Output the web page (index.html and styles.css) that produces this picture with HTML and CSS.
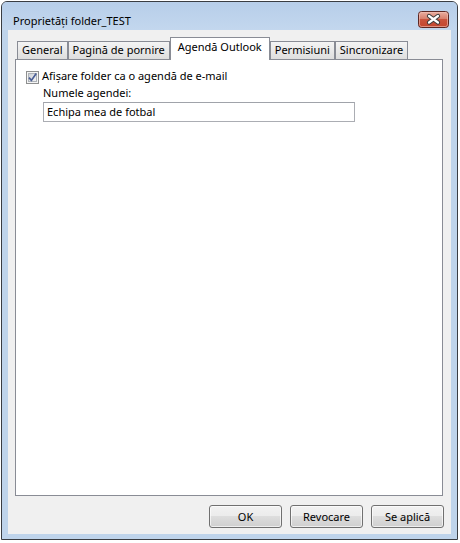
FILE: index.html
```html
<!DOCTYPE html>
<html lang="ro">
<head>
<meta charset="utf-8">
<title>Proprietăți folder_TEST</title>
<link rel="stylesheet" href="styles.css">
</head>
<body>
<div class="window">
  <div class="titlebar">
    <span class="title">Proprietăți folder_TEST</span>
    <button class="close" aria-label="Închidere">
      <svg width="31" height="17" viewBox="0 0 31 17">
        <defs>
          <linearGradient id="cg" x1="0" y1="0" x2="0" y2="1">
            <stop offset="0" stop-color="#eab0a3"/>
            <stop offset="0.45" stop-color="#d8806d"/>
            <stop offset="0.5" stop-color="#c9533d"/>
            <stop offset="1" stop-color="#c4452e"/>
          </linearGradient>
        </defs>
        <rect x="0.5" y="0.5" width="30" height="16" rx="3" fill="url(#cg)" stroke="#5c2723"/>
        <rect x="1.5" y="1.5" width="28" height="14" rx="2" fill="none" stroke="#f1c3b8" stroke-opacity="0.6"/>
        <path d="M11 5 L20 11.5 M20 5 L11 11.5" stroke="#3b3b3b" stroke-width="4.2" stroke-linecap="round"/>
        <path d="M11 5 L20 11.5 M20 5 L11 11.5" stroke="#ffffff" stroke-width="2.2" stroke-linecap="round"/>
      </svg>
    </button>
  </div>
  <div class="client">
    <div class="tabs">
      <div class="tab">General</div>
      <div class="tab">Pagină de pornire</div>
      <div class="tab tab-active">Agendă Outlook</div>
      <div class="tab">Permisiuni</div>
      <div class="tab">Sincronizare</div>
    </div>
    <div class="panel">
      <div class="check-row">
        <svg class="checkbox" width="13" height="13" viewBox="0 0 13 13">
          <defs>
            <linearGradient id="bg" x1="0" y1="0" x2="1" y2="1">
              <stop offset="0" stop-color="#cbcfd5"/>
              <stop offset="1" stop-color="#f7f7f7"/>
            </linearGradient>
          </defs>
          <rect x="0.5" y="0.5" width="12" height="12" fill="#f4f4f4" stroke="#8e8f8f"/>
          <rect x="2.5" y="2.5" width="8" height="8" fill="url(#bg)" stroke="#aeb3b9"/>
          <path d="M3 6.6 L5.4 9.4 L10.2 2.6" fill="none" stroke="#4a5e96" stroke-width="1.7"/>
        </svg>
        <span class="check-label">Afișare folder ca o agendă de e-mail</span>
      </div>
      <div class="field-label">Numele agendei:</div>
      <input class="textbox" type="text" value="Echipa mea de fotbal">
    </div>
    <div class="buttons">
      <button class="btn">OK</button>
      <button class="btn">Revocare</button>
      <button class="btn">Se aplică</button>
    </div>
  </div>
</div>
</body>
</html>
```
FILE: styles.css
```css
html, body {
  margin: 0;
  padding: 0;
  background: #ffffff;
}
body {
  font-family: "Noto Sans", "Open Sans", sans-serif;
  font-size: 11px;
  color: #000;
}
.window {
  margin: 1px 0 0 1px;
  width: 457px;
  height: 539px;
  box-sizing: border-box;
  border: 1px solid #3a3d42;
  border-radius: 6px 6px 0 0;
  background: #bfd4eb;
  padding: 0 6px 5px 6px;
  display: flex;
  flex-direction: column;
}
.titlebar {
  height: 28px;
  margin: 0 -6px;
  padding: 0 8px 0 11px;
  display: flex;
  justify-content: space-between;
  align-items: flex-start;
  background: linear-gradient(#b7cee9, #c3d7ee);
  border-radius: 5px 5px 0 0;
}
.title {
  line-height: 15px;
  margin-top: 11px;
  font-size: 11px;
}
.close {
  margin-top: 9px;
  padding: 0;
  border: 0;
  background: none;
  width: 31px;
  height: 17px;
  display: block;
}
.close svg { display: block; }
.client {
  flex: 1;
  background: #f0f0f0;
  padding: 7px 8px 6px 7px;
  display: flex;
  flex-direction: column;
}
.tabs {
  height: 22px;
  display: flex;
  align-items: flex-end;
  padding-left: 2px;
}
.tab {
  height: 18px;
  box-sizing: border-box;
  border: 1px solid #898c95;
  border-bottom: 0;
  padding: 0 4px;
  line-height: 16px;
  white-space: nowrap;
  background: linear-gradient(#f4f4f4, #e9e9e9 50%, #dedede);
}
.tab-active {
  height: 23px;
  margin-bottom: -1px;
  line-height: 17px;
  padding: 0 7px;
  background: #ffffff;
  position: relative;
  z-index: 1;
}
.panel {
  height: 437px;
  box-sizing: border-box;
  border: 1px solid #898c95;
  background: #ffffff;
  padding: 8px 10px 0 10px;
  display: flex;
  flex-direction: column;
  align-items: flex-start;
}
.check-row {
  display: flex;
  align-items: flex-start;
  gap: 3px;
}
.checkbox {
  margin-top: 3px;
  display: block;
}
.check-label {
  line-height: 15px;
}
.field-label {
  margin: 1px 0 0 17px;
  line-height: 15px;
}
.textbox {
  margin: 2px 0 0 17px;
  width: 312px;
  height: 20px;
  box-sizing: border-box;
  border: 1px solid #abadb3;
  border-top-color: #a0a3aa;
  padding: 0 3px 2px 3px;
  font-family: inherit;
  font-size: 11px;
  line-height: 15px;
  color: #000;
  background: #fff;
  outline: none;
}
.buttons {
  margin-top: 9px;
  display: flex;
  justify-content: flex-end;
  gap: 8px;
  margin-right: -1px;
}
.btn {
  width: 73px;
  height: 23px;
  box-sizing: border-box;
  border: 1px solid #707070;
  border-radius: 3px;
  background: linear-gradient(#f2f2f2 0%, #ebebeb 50%, #dddddd 50%, #cfcfcf 100%);
  box-shadow: inset 0 0 0 1px rgba(255,255,255,0.65);
  font-family: inherit;
  font-size: 11px;
  color: #000;
  padding: 0;
  line-height: 15px;
}
```
